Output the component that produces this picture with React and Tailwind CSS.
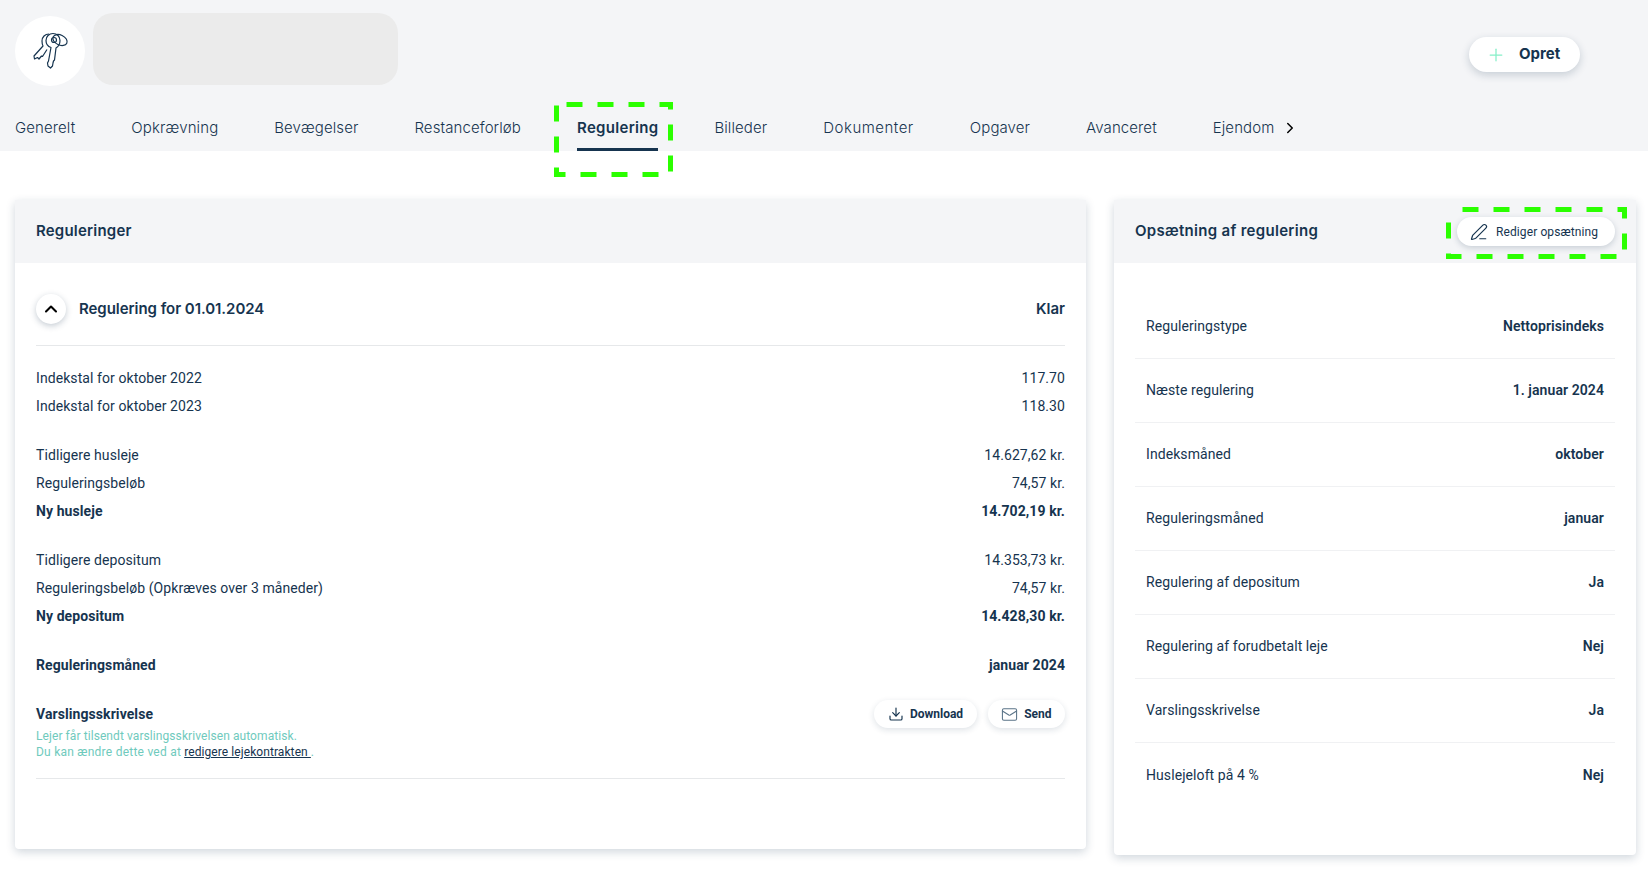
import React from 'react';
import { ChevronRight, ChevronUp, Download, Mail, PenLine, Plus } from 'lucide-react';

const tabs = ['Generelt', 'Opkrævning', 'Bevægelser', 'Restanceforløb', 'Regulering', 'Billeder', 'Dokumenter', 'Opgaver', 'Avanceret', 'Ejendom'];

const groups = [
  [
    { label: 'Indekstal for oktober 2022', value: '117.70' },
    { label: 'Indekstal for oktober 2023', value: '118.30' },
  ],
  [
    { label: 'Tidligere husleje', value: '14.627,62 kr.' },
    { label: 'Reguleringsbeløb', value: '74,57 kr.' },
    { label: 'Ny husleje', value: '14.702,19 kr.', bold: true },
  ],
  [
    { label: 'Tidligere depositum', value: '14.353,73 kr.' },
    { label: 'Reguleringsbeløb (Opkræves over 3 måneder)', value: '74,57 kr.' },
    { label: 'Ny depositum', value: '14.428,30 kr.', bold: true },
  ],
  [{ label: 'Reguleringsmåned', value: 'januar 2024', bold: true }],
];

const setup = [
  ['Reguleringstype', 'Nettoprisindeks'],
  ['Næste regulering', '1. januar 2024'],
  ['Indeksmåned', 'oktober'],
  ['Reguleringsmåned', 'januar'],
  ['Regulering af depositum', 'Ja'],
  ['Regulering af forudbetalt leje', 'Nej'],
  ['Varslingsskrivelse', 'Ja'],
  ['Huslejeloft på 4 %', 'Nej'],
];

function KeysIcon() {
  return (
    <svg width="70" height="70" viewBox="0 0 70 70" fill="none" stroke="#16344f" strokeWidth="1.2" strokeLinejoin="round" aria-hidden>
      <path d="M34 18c-4 0-7 3-7 7 0 2 0 3 1 5L19 40l.5 3 3-1.5 1.5 1.5 2.5-3 1 .5 4.5-7" />
      <path d="M36 31.5c-3-1-5-4-5-7 0-4 3-7 7-7 4 0 7 3 7 7 0 3-1.5 6-4 7.5L39.5 44l-1 1-.5 2-.5 3-2 2-2.5-2-.5-3 1-2z" />
      <ellipse cx="45" cy="24" rx="7.5" ry="5" transform="rotate(25 45 24)" />
      <circle cx="39" cy="24" r="2.5" />
    </svg>
  );
}

// grønne stiplede markeringer ligger oven på siden
function DashedBox({ className, width, height, offset }) {
  return (
    <svg className={className} width={width} height={height} viewBox={`0 0 ${width} ${height}`} fill="none" aria-hidden>
      <rect x="2.5" y="2.5" width={width - 5} height={height - 5} stroke="#2bff00" strokeWidth="5" strokeDasharray="16 15" strokeDashoffset={offset} />
    </svg>
  );
}

function Row({ label, value, bold }) {
  return (
    <div className={`flex justify-between h-7 items-center text-[14px] tracking-[0.08px] ${bold ? 'font-bold' : ''}`}>
      <span>{label}</span>
      <span>{value}</span>
    </div>
  );
}

function PillButton({ icon, children }) {
  return (
    <button type="button" className="flex items-center justify-center gap-[6px] h-7 rounded-full bg-white px-[13.5px] text-[12px] font-bold shadow-[0_2px_6px_rgba(22,52,79,0.14)]">
      {icon}
      {children}
    </button>
  );
}

export default function App() {
  return (
    <div className="relative min-h-[871px] bg-white text-[#16344f] font-['Roboto',sans-serif]">
      <header className="bg-[#f4f5f7] h-[151px] pl-[15px] pr-[68px] flex flex-col">
        <div className="flex items-start">
          <div className="mt-4 w-[70px] h-[70px] rounded-full bg-white shrink-0">
            <KeysIcon />
          </div>
          <div className="mt-[13px] ml-2 w-[305px] h-[72px] rounded-[20px] bg-[#ebebeb]" />
          <button type="button" className="ml-auto mt-[37px] flex items-center gap-[13px] h-[35px] w-[111px] pl-[17px] rounded-full bg-white text-[15px] font-bold font-['Inter',sans-serif] shadow-[0_3px_8px_rgba(22,52,79,0.2)]">
            <Plus className="w-5 h-5 text-[#86efc8]" strokeWidth={1.5} />
            Opret
          </button>
        </div>
        <nav className="flex items-stretch gap-14 mt-auto h-[50px] font-['Inter',sans-serif] text-[15px] font-light tracking-[0.1px]">
          {tabs.map((tab) => (
            <div
              key={tab}
              className={`flex items-center whitespace-nowrap ${tab === 'Regulering' ? 'pt-[7px] font-semibold tracking-[0.3px] border-b-[3px] border-[#16344f]' : 'pt-1'} ${tab === 'Dokumenter' ? 'tracking-[0.5px]' : ''}`}
            >
              {tab}
              {tab === 'Ejendom' && <ChevronRight className="w-[18px] h-[18px] ml-[7px] text-black" strokeWidth={2} />}
            </div>
          ))}
        </nav>
      </header>

      <main className="flex items-start gap-7 pl-[15px] pr-3 pt-[49px]">
        <section className="w-[1071px] h-[649px] rounded-b-[4px] bg-white shadow-[0_3px_10px_rgba(22,52,79,0.2)]">
          <div className="flex items-center h-[63px] px-[21px] bg-[#f4f5f7] font-['Inter',sans-serif] text-[15px] font-semibold tracking-[0.2px]">
            Reguleringer
          </div>
          <div className="px-[21px] pt-[31px]">
            <div className="flex items-center h-[52px] pb-[21px] border-b border-[#e6e8ea]">
              <button type="button" className="flex items-center justify-center w-[30px] h-[30px] rounded-full bg-white shadow-[0_2px_6px_rgba(22,52,79,0.25)]">
                <ChevronUp className="w-5 h-5 text-black" strokeWidth={2.5} />
              </button>
              <span className="ml-[13px] font-['Inter',sans-serif] text-[15px] font-semibold tracking-[-0.05px]">Regulering for 01.01.2024</span>
              <span className="ml-auto font-['Inter',sans-serif] text-[15px] font-semibold">Klar</span>
            </div>
            <div className="pt-[18px] space-y-[21px]">
              {groups.map((group, i) => (
                <div key={i}>
                  {group.map((row) => (
                    <Row key={row.label} {...row} />
                  ))}
                </div>
              ))}
            </div>
            <div className="flex justify-between mt-[21px] h-[77px] pb-px box-content border-b border-[#e6e8ea]">
              <div>
                <div className="h-7 flex items-center text-[14px] font-bold tracking-[0.08px]">Varslingsskrivelse</div>
                <p className="text-[12px] leading-4 tracking-[0.08px] text-[#6fcabd]">
                  Lejer får tilsendt varslingsskrivelsen automatisk.
                  <br />
                  <span className="tracking-[0.24px]">Du kan ændre dette ved at</span>{' '}
                  <a className="text-[#16344f] underline">redigere lejekontrakten&nbsp;</a>.
                </p>
              </div>
              <div className="flex gap-[11px] h-7">
                <PillButton icon={<Download className="w-4 h-4" strokeWidth={1.75} />}>Download</PillButton>
                <PillButton icon={<Mail className="w-[17px] h-[17px] text-[#5b7488]" strokeWidth={1.5} />}>Send</PillButton>
              </div>
            </div>
          </div>
        </section>

        <section className="w-[522px] h-[655px] rounded-b-[4px] bg-white shadow-[0_3px_10px_rgba(22,52,79,0.2)]">
          <div className="flex items-center justify-between h-[63px] px-[21px] bg-[#f4f5f7]">
            <span className="font-['Inter',sans-serif] text-[15px] font-semibold tracking-[0.3px]">Opsætning af regulering</span>
            <button type="button" className="flex items-center gap-2 h-[29px] w-[158px] pl-[13px] rounded-full bg-white text-[12px] tracking-[0.1px] shadow-[0_2px_6px_rgba(22,52,79,0.2)]">
              <PenLine className="w-[18px] h-[18px]" strokeWidth={1.6} />
              Rediger opsætning
            </button>
          </div>
          <div className="px-[21px] pt-8">
            {setup.map(([label, value], i) => (
              <div key={label} className={`flex items-center justify-between h-16 px-[11px] text-[14px] tracking-[0.08px] ${i < setup.length - 1 ? 'border-b border-[#f0f1f3]' : ''}`}>
                <span>{label}</span>
                <span className="font-semibold">{value}</span>
              </div>
            ))}
          </div>
        </section>
      </main>

      <DashedBox className="absolute left-[554px] top-[102px]" width={119} height={75} offset={21} />
      <DashedBox className="absolute left-[1446px] top-[207px]" width={181} height={52} offset={17} />
    </div>
  );
}
